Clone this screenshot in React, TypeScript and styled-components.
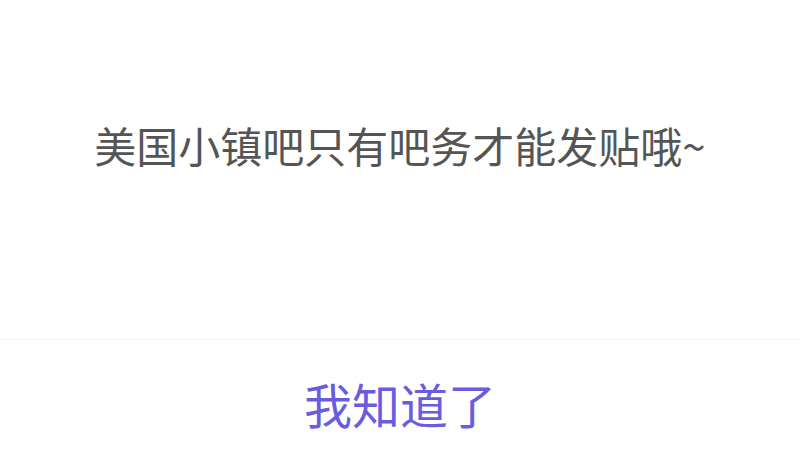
import React from 'react';
import styled, { createGlobalStyle } from 'styled-components';

const GlobalStyle = createGlobalStyle`
    html, body {
        margin: 0;
        padding: 0;
        background: #ffffff;
    }

    body {
        font-family: "Noto Sans CJK SC", "Noto Sans", sans-serif;
    }
`;

const Dialog = styled.div`
    width: 800px;
    height: 450px;
    display: flex;
    flex-direction: column;
    background: #ffffff;
    overflow: hidden;
`;

const Message = styled.div`
    height: 339px;
    box-sizing: border-box;
    padding-top: 115px;
    font-size: 42px;
    line-height: 60px;
    color: #555555;
    text-align: center;
`;

const Actions = styled.div`
    flex: 1;
    display: flex;
    border-top: 1px solid #f3f3f3;
`;

const ActionButton = styled.button`
    flex: 1;
    border: none;
    background: transparent;
    padding: 15px 0 0 0;
    font-family: inherit;
    font-size: 48px;
    line-height: 60px;
    color: #6a5ce0;
    cursor: pointer;
`;

export default function App() {
    return (
        <>
            <GlobalStyle />
            <Dialog>
                <Message>美国小镇吧只有吧务才能发贴哦~</Message>
                <Actions>
                    <ActionButton>我知道了</ActionButton>
                </Actions>
            </Dialog>
        </>
    );
}
